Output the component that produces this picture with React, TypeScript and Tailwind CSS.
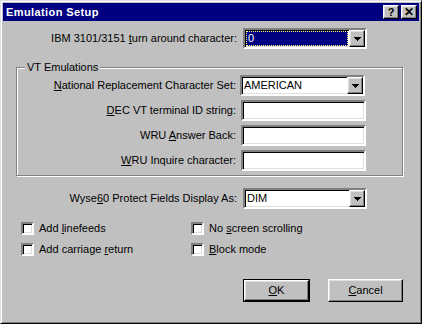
import React from 'react';

const sunken =
  'border-2 border-t-[#808080] border-l-[#808080] border-b-white border-r-white shadow-[inset_1px_1px_0_#000,inset_-1px_-1px_0_#dfdfdf]';
const raised =
  'border border-t-white border-l-white border-b-black border-r-black shadow-[inset_-1px_-1px_0_#808080,inset_1px_1px_0_#dfdfdf]';

const Arrow = () => (
  <svg width="7" height="4" viewBox="0 0 7 4" shapeRendering="crispEdges">
    <path d="M0 0h7v1h-1v1h-1v1h-1v1h-1v-1h-1v-1h-1v-1h-1z" fill="#000" />
  </svg>
);

const Combo = ({ value, width, selected }: { value: string; width: string; selected?: boolean }) => (
  <div className={`${width} h-[21px] bg-white flex ${sunken}`}>
    <div className="flex-1 flex p-[1px] min-w-0">
      {selected ? (
        <div className="flex-1 flex items-center bg-[#000080] text-white outline-1 outline-dotted outline-[#ffff80] -outline-offset-1 pl-[2px]">
          {value}
        </div>
      ) : (
        <div className="flex-1 flex items-center pl-[1px]">{value}</div>
      )}
    </div>
    <div className={`w-[16px] h-full bg-[#c0c0c0] flex items-center justify-center ${raised}`}>
      <Arrow />
    </div>
  </div>
);

const TextBox = () => <div className={`w-[125px] h-[21px] bg-white ${sunken}`} />;

const CheckBox = ({ children }: { children: React.ReactNode }) => (
  <div className="flex items-center h-[13px]">
    <div className={`w-[13px] h-[13px] bg-white ${sunken}`} />
    <span className="ml-[5px]">{children}</span>
  </div>
);

export default function App() {
  return (
    <div className="w-[422px] h-[324px] bg-[#c0c0c0] border border-t-[#dfdfdf] border-l-[#dfdfdf] border-b-black border-r-black shadow-[inset_1px_1px_0_#fff,inset_-1px_-1px_0_#808080] p-[2px] font-['Liberation_Sans',Arial,sans-serif] text-[11px] text-black leading-none">
      {/* title bar */}
      <div className="h-[18px] bg-[#000080] flex items-center pl-[3px] pr-[2px]">
        <span className="text-white font-bold text-[11px] tracking-[0.4px]">Emulation Setup</span>
        <div className="ml-auto flex gap-[2px]">
          <div className={`w-[16px] h-[14px] bg-[#c0c0c0] flex items-center justify-center font-bold text-[11px] ${raised}`}>?</div>
          <div className={`w-[16px] h-[14px] bg-[#c0c0c0] flex items-center justify-center font-bold text-[12px] ${raised}`}>✕</div>
        </div>
      </div>

      {/* turn around */}
      <div className="flex items-center mt-[7px] h-[21px]">
        <div className="w-[234px] text-right">
          IBM 3101/3151 <u>t</u>urn around character:
        </div>
        <div className="ml-[6px]">
          <Combo value="0" width="w-[124px]" selected />
        </div>
      </div>

      {/* VT Emulations group */}
      <div className="relative ml-[13px] mt-[18px] w-[387px] h-[109px] border border-[#808080] shadow-[inset_1px_1px_0_#fff,1px_1px_0_#fff]">
        <span className="absolute left-[8px] -top-[6px] px-[2px] bg-[#c0c0c0]">VT Emulations</span>
        <div className="flex flex-col gap-[4px] pt-[7px]">
          <div className="flex items-center">
            <div className="w-[219px] text-right">
              <u>N</u>ational Replacement Character Set:
            </div>
            <div className="ml-[4px]">
              <Combo value="AMERICAN" width="w-[125px]" />
            </div>
          </div>
          <div className="flex items-center">
            <div className="w-[219px] text-right">
              <u>D</u>EC VT terminal ID string:
            </div>
            <div className="ml-[5px]">
              <TextBox />
            </div>
          </div>
          <div className="flex items-center">
            <div className="w-[219px] text-right">
              WRU <u>A</u>nswer Back:
            </div>
            <div className="ml-[5px]">
              <TextBox />
            </div>
          </div>
          <div className="flex items-center">
            <div className="w-[219px] text-right">
              <u>W</u>RU Inquire character:
            </div>
            <div className="ml-[5px]">
              <TextBox />
            </div>
          </div>
        </div>
      </div>

      {/* Wyse60 */}
      <div className="flex items-center mt-[12px] h-[21px]">
        <div className="w-[234px] text-right">
          Wyse<u>6</u>0 Protect Fields Display As:
        </div>
        <div className="ml-[6px]">
          <Combo value="DIM" width="w-[124px]" />
        </div>
      </div>

      {/* checkboxes */}
      <div className="grid grid-cols-[170px_1fr] gap-y-[8px] ml-[18px] mt-[13px]">
        <CheckBox>
          Add <u>l</u>inefeeds
        </CheckBox>
        <CheckBox>
          No <u>s</u>creen scrolling
        </CheckBox>
        <CheckBox>
          Add carriage <u>r</u>eturn
        </CheckBox>
        <CheckBox>
          <u>B</u>lock mode
        </CheckBox>
      </div>

      {/* buttons */}
      <div className="flex justify-end gap-[18px] mt-[23px] mr-[16px]">
        <div className="w-[67px] h-[23px] border border-black">
          <div className={`w-full h-full bg-[#c0c0c0] flex items-center justify-center ${raised}`}>
            <span>
              <u>O</u>K
            </span>
          </div>
        </div>
        <div className={`w-[75px] h-[23px] bg-[#c0c0c0] flex items-center justify-center ${raised}`}>
          <span>
            <u>C</u>ancel
          </span>
        </div>
      </div>
    </div>
  );
}
